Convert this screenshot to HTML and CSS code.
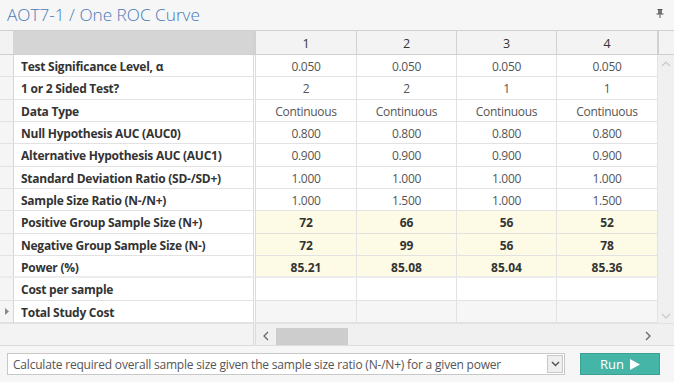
FILE: index.html
```html
<!DOCTYPE html>
<html>
<head>
<meta charset="utf-8">
<link rel="stylesheet" href="styles.css">
</head>
<body>
<div class="app">
  <div class="titlebar">
    <span class="title">AOT7-1 / One ROC Curve</span>
    <svg class="pin" width="8" height="9" viewBox="0 0 8 9"><rect x="1.5" y="0" width="5" height="1" fill="#555"/><rect x="2" y="1" width="4" height="4" fill="#777"/><rect x="0.5" y="4.5" width="7" height="1" fill="#555"/><rect x="3.5" y="5.5" width="1" height="3.5" fill="#555"/></svg>
  </div>
  <div class="gridarea">
    <div class="grid">
      <div class="c rh hdr"></div><div class="c lh hdr"></div><div class="c ch hdr">1</div><div class="c ch hdr">2</div><div class="c ch hdr">3</div><div class="c ch hdr">4</div>

      <div class="c rh"></div><div class="c lbl">Test Significance Level, α</div><div class="c v">0.050</div><div class="c v">0.050</div><div class="c v">0.050</div><div class="c v">0.050</div>
      <div class="c rh"></div><div class="c lbl">1 or 2 Sided Test?</div><div class="c v">2</div><div class="c v">2</div><div class="c v">1</div><div class="c v">1</div>
      <div class="c rh"></div><div class="c lbl">Data Type</div><div class="c v">Continuous</div><div class="c v">Continuous</div><div class="c v">Continuous</div><div class="c v">Continuous</div>
      <div class="c rh"></div><div class="c lbl">Null Hypothesis AUC (AUC0)</div><div class="c v">0.800</div><div class="c v">0.800</div><div class="c v">0.800</div><div class="c v">0.800</div>
      <div class="c rh"></div><div class="c lbl">Alternative Hypothesis AUC (AUC1)</div><div class="c v">0.900</div><div class="c v">0.900</div><div class="c v">0.900</div><div class="c v">0.900</div>
      <div class="c rh"></div><div class="c lbl">Standard Deviation Ratio (SD-/SD+)</div><div class="c v">1.000</div><div class="c v">1.000</div><div class="c v">1.000</div><div class="c v">1.000</div>
      <div class="c rh"></div><div class="c lbl">Sample Size Ratio (N-/N+)</div><div class="c v">1.000</div><div class="c v">1.500</div><div class="c v">1.000</div><div class="c v">1.500</div>
      <div class="c rh"></div><div class="c lbl">Positive Group Sample Size (N+)</div><div class="c v out">72</div><div class="c v out">66</div><div class="c v out">56</div><div class="c v out">52</div>
      <div class="c rh"></div><div class="c lbl">Negative Group Sample Size (N-)</div><div class="c v out">72</div><div class="c v out">99</div><div class="c v out">56</div><div class="c v out">78</div>
      <div class="c rh pw"></div><div class="c lbl pw">Power (%)</div><div class="c v out pw">85.21</div><div class="c v out pw">85.08</div><div class="c v out pw">85.04</div><div class="c v out pw">85.36</div>
      <div class="c rh"></div><div class="c lbl">Cost per sample</div><div class="c v"></div><div class="c v"></div><div class="c v"></div><div class="c v"></div>
      <div class="c rh cur"><svg width="4" height="7" viewBox="0 0 4 7"><path d="M0 0 L4 3.5 L0 7 Z" fill="#888"/></svg></div><div class="c lbl">Total Study Cost</div><div class="c v last"></div><div class="c v last"></div><div class="c v last"></div><div class="c v last"></div>
    </div>
    <div class="vscroll">
      <div class="vs-head"></div>
      <div class="vs-track">
        <svg class="arr" width="10" height="6" viewBox="0 0 10 6"><path d="M1 5 L5 1 L9 5" fill="none" stroke="#c8c8c8" stroke-width="1.2"/></svg>
        <svg class="arr" width="10" height="6" viewBox="0 0 10 6"><path d="M1 1 L5 5 L9 1" fill="none" stroke="#c8c8c8" stroke-width="1.2"/></svg>
      </div>
    </div>
  </div>
  <div class="hscroll">
    <div class="hs-frozen"></div>
    <div class="hs-track">
      <svg class="harr left" width="6" height="10" viewBox="0 0 6 10"><path d="M5 1 L1 5 L5 9" fill="none" stroke="#666" stroke-width="1.3"/></svg>
      <div class="thumb"></div>
      <div class="hs-rest"></div>
      <svg class="harr right" width="6" height="10" viewBox="0 0 6 10"><path d="M1 1 L5 5 L1 9" fill="none" stroke="#666" stroke-width="1.3"/></svg>
    </div>
    <div class="hs-corner"></div>
  </div>
  <div class="footer">
    <div class="select">
      <span class="sel-text">Calculate required overall sample size given the sample size ratio (N-/N+) for a given power</span>
      <span class="sel-btn"><svg width="9" height="6" viewBox="0 0 9 6"><path d="M1 1 L4.5 4.5 L8 1" fill="none" stroke="#555" stroke-width="1.5"/></svg></span>
    </div>
    <button class="run">Run <svg width="10" height="11" viewBox="0 0 10 11"><path d="M0 0 L10 5.5 L0 11 Z" fill="#fff"/></svg></button>
  </div>
</div>
</body>
</html>
```
FILE: styles.css
```css
* { box-sizing: border-box; }
html, body { margin: 0; padding: 0; }
body {
  width: 674px;
  height: 382px;
  background: #f6f6f6;
  font-family: "Open Sans", "DejaVu Sans", sans-serif;
  overflow: hidden;
}
.app { width: 674px; height: 382px; display: flex; flex-direction: column; }
.titlebar {
  height: 31px;
  display: flex;
  align-items: center;
  justify-content: space-between;
  padding: 0 10px 0 7px;
  border-bottom: 1px solid #d0d0d0;
}
.title {
  font-size: 17.2px;
  font-weight: 300;
  color: #4878b8;
  margin-top: -2px;
}
.pin { margin-top: -4px; }
.gridarea { display: flex; height: 292px; background: #fff; }
.grid {
  width: 658px;
  display: grid;
  grid-template-columns: 14px 242px 101px 100px 100px 101px;
  grid-template-rows: 24px repeat(12, 22.33px);
}
.c {
  border-right: 1px solid #e2e2e2;
  border-bottom: 1px solid #e2e2e2;
  font-size: 12px;
  display: flex;
  align-items: center;
  white-space: nowrap;
  overflow: hidden;
  padding-top: 2px;
}
.rh { background: #f5f5f5; border-right-color: #d6d6d6; justify-content: center; padding-top: 0; }
.hdr { border-bottom: 1px solid #cfcfcf; }
.rh.hdr { background: #f2f2f2; }
.lh { background: #d5d5d5; border-right: 3px double #cfcfcf; }
.ch { background: #f3f3f3; justify-content: center; color: #333; font-size: 12.5px; border-right-color: #d2d2d2; }
.lbl {
  font-weight: 700;
  color: #333;
  padding-left: 7px;
  border-right: 3px double #dcdcdc;
  font-size: 12px;
  letter-spacing: -0.25px;
}
.v { justify-content: center; color: #555; letter-spacing: -0.3px; }
.out { background: #fdfbe6; font-weight: 700; color: #333; letter-spacing: 0; }
.pw { border-bottom: 2px solid #ececec; }
.last { background: #f6f6f6; }
.vscroll { width: 16px; display: flex; flex-direction: column; background: #f0f0f0; }
.vs-head { height: 24px; background: #f3f3f3; border-left: 1px solid #cfcfcf; border-bottom: 1px solid #cfcfcf; }
.vs-track { flex: 1; display: flex; flex-direction: column; justify-content: space-between; align-items: center; padding: 6px 0 4px; }
.hscroll { height: 22px; display: flex; background: #f0f0f0; border-top: 1px solid #e2e2e2; }
.hs-frozen { width: 256px; border-right: 3px double #dcdcdc; background: #f3f3f3; }
.hs-track { width: 402px; display: flex; align-items: center; }
.harr { flex: none; }
.harr.left { margin: 2px 7px 0 7px; }
.harr.right { margin: 2px 7px 0 4px; }
.thumb { width: 72px; height: 17px; background: #cdcdcd; align-self: flex-end; }
.hs-rest { flex: 1; }
.hs-corner { width: 16px; }
.footer {
  flex: 1;
  display: flex;
  align-items: center;
  padding: 0 14px 0 7px;
  border-top: 1px solid #dcdcdc;
}
.select {
  width: 558px;
  height: 22px;
  background: #fff;
  border: 1px solid #c8c8c8;
  display: flex;
  align-items: center;
  justify-content: space-between;
  padding: 0 1px 0 5px;
}
.sel-text { font-size: 12px; color: #555; white-space: nowrap; letter-spacing: -0.2px; }
.sel-btn {
  width: 16px;
  height: 18px;
  background: #efefef;
  border: 1px solid #c8c8c8;
  display: flex;
  align-items: center;
  justify-content: center;
}
.run {
  margin-left: 15px;
  width: 80px;
  height: 22px;
  background: #45b5a8;
  border: 1px solid #3aa194;
  color: #fff;
  font-family: "Open Sans", sans-serif;
  font-size: 13px;
  display: flex;
  align-items: center;
  justify-content: center;
  gap: 6px;
  padding: 0;
}
```
